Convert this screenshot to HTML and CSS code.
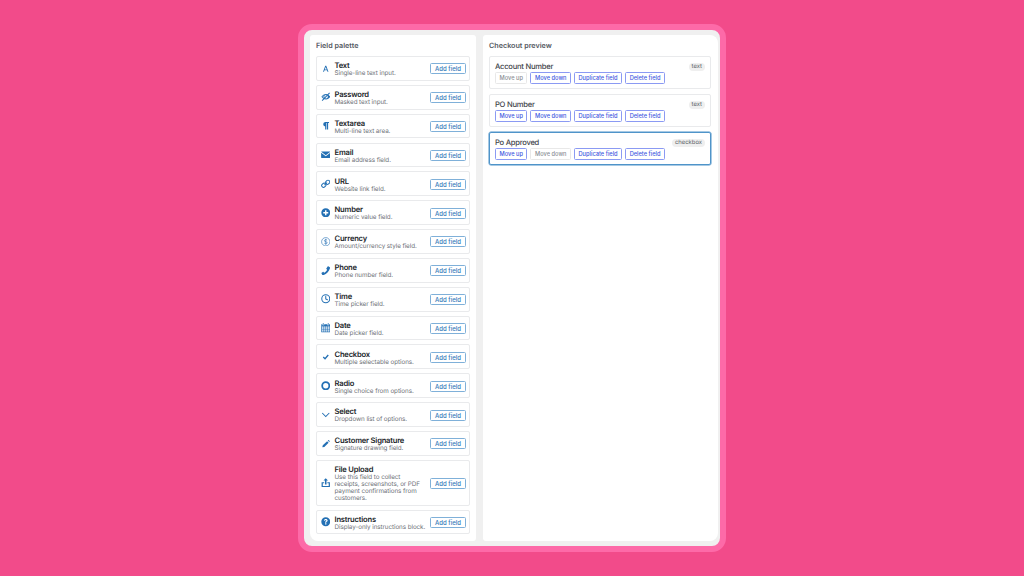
FILE: index.html
```html
<!DOCTYPE html>
<html lang="en">
<head>
<meta charset="utf-8">
<title>Checkout builder</title>
<link rel="stylesheet" href="styles.css">
</head>
<body>
<main class="frame">
  <section class="panel palette">
    <h2>Field palette</h2>
    <ul class="rows">
      <li class="row"><svg class="ico" viewBox="0 0 16 16"><path d="M7.200 3h1.600L12.600 13h-1.700l-.8-2.300H5.900l-.8 2.300H3.400zM6.400 9.300h3.200L8 4.900z"/></svg><div class="txt"><strong>Text</strong><span>Single-line text input.</span></div><button>Add field</button></li>
      <li class="row"><svg class="ico" viewBox="0 0 16 16"><path d="M8.500 3.400c3.200 0 5.700 2.300 7.300 4.600-1.600 2.300-4.100 4.600-7.300 4.600S2.300 10.300.7 8c1.600-2.300 4.600-4.600 7.800-4.600zM8.500 5a3 3 0 1 0 0 6 3 3 0 0 0 0-6zM2.400 8c1.300 1.500 3 2.900 5.600 3-2.200-.3-4-1.500-4-3s1.800-2.700 4-3C5.400 5.100 3.700 6.500 2.400 8z"/><path d="M13.900.8l1.200 1.200L2.500 15.200l-1.200-1.200z"/></svg><div class="txt"><strong>Password</strong><span>Masked text input.</span></div><button>Add field</button></li>
      <li class="row"><svg class="ico" viewBox="0 0 16 16"><path d="M7 1.500h6.500v2H12V14.500H10V3.500H9V14.500H7V9.200A3.900 3.900 0 0 1 7 1.500z"/></svg><div class="txt"><strong>Textarea</strong><span>Multi-line text area.</span></div><button>Add field</button></li>
      <li class="row"><svg class="ico" viewBox="0 0 16 16"><path d="M1 2.500h14c.3 0 .5.200.6.400L8 8.800.4 2.900c.1-.2.300-.4.600-.4zM.2 4.600L8 10.700l7.800-6.100v8.100c0 .4-.3.800-.8.800H1c-.5 0-.8-.4-.8-.8z"/></svg><div class="txt"><strong>Email</strong><span>Email address field.</span></div><button>Add field</button></li>
      <li class="row"><svg class="ico" viewBox="0 0 16 16"><path d="M6.400 9.600l3.200-3.200" class="line"/><rect x="8.300" y="1.800" width="6" height="7.500" rx="2.800" transform="rotate(45 11.300 5.500)" class="line"/><rect x="1.700" y="6.700" width="6" height="7.500" rx="2.800" transform="rotate(45 4.700 10.500)" class="line"/></svg><div class="txt"><strong>URL</strong><span>Website link field.</span></div><button>Add field</button></li>
      <li class="row"><svg class="ico" viewBox="0 0 16 16"><path fill-rule="evenodd" d="M8 .5a7.500 7.500 0 1 1 0 15A7.500 7.500 0 0 1 8 .5zM6.800 3.800v3H3.800v2.400h3v3h2.400v-3h3V6.800h-3v-3z"/></svg><div class="txt"><strong>Number</strong><span>Numeric value field.</span></div><button>Add field</button></li>
      <li class="row"><svg class="ico" viewBox="0 0 16 16"><circle cx="8" cy="8" r="7" class="thin"/><path d="M10.300 5.700C9.900 4.900 9 4.500 8 4.500c-1.300 0-2.300.7-2.300 1.800 0 2.500 4.700 1 4.700 3.500 0 1-1 1.700-2.400 1.700-1.100 0-2-.5-2.500-1.300M8 3v10" class="thin"/></svg><div class="txt"><strong>Currency</strong><span>Amount/currency style field.</span></div><button>Add field</button></li>
      <li class="row"><svg class="ico" viewBox="0 0 16 16"><path d="M12.300.6l2.500 1.500c.5.300.7.800.5 1.300C13.600 9.400 9 13.800 3.600 15.500c-.5.100-1 0-1.300-.5L.9 12.500c-.2-.4-.1-.8.200-1l2-1.500c.4-.2.800-.2 1.100.1l1.200 1.300c2-1 3.900-3 4.900-5.200L9.200 5.200c-.3-.3-.4-.7-.2-1.100L11.200.9c.3-.4.700-.5 1.100-.3z"/></svg><div class="txt"><strong>Phone</strong><span>Phone number field.</span></div><button>Add field</button></li>
      <li class="row"><svg class="ico" viewBox="0 0 16 16"><circle cx="8" cy="8" r="6.700" class="line"/><path d="M8 4v4.300l2.800 1.500" class="line"/></svg><div class="txt"><strong>Time</strong><span>Time picker field.</span></div><button>Add field</button></li>
      <li class="row"><svg class="ico" viewBox="0 0 16 16"><path fill-rule="evenodd" d="M3 .3h1.600V3H3zM11.400.3H13V3h-1.600zM.5 2.200h1.800v1.600h3.100V2.200h5.200v1.600h3.100V2.200h1.800v13.500H.5zM1.700 6v2.100h2.600V6zm3.500 0v2.100h2.400V6zm3.300 0v2.100h2.400V6zm3.300 0v2.100h2.500V6zM1.700 9v2h2.600V9zm3.500 0v2h2.400V9zm3.300 0v2h2.400V9zm3.300 0v2h2.500V9zM1.700 12v2.500h2.600V12zm3.500 0v2.500h2.400V12zm3.300 0v2.500h2.400V12zm3.300 0v2.500h2.500V12z"/></svg><div class="txt"><strong>Date</strong><span>Date picker field.</span></div><button>Add field</button></li>
      <li class="row"><svg class="ico" viewBox="0 0 16 16"><path d="M3.800 8.300l3 3.100 5.400-6.400" class="check"/></svg><div class="txt"><strong>Checkbox</strong><span>Multiple selectable options.</span></div><button>Add field</button></li>
      <li class="row"><svg class="ico" viewBox="0 0 16 16"><circle cx="8" cy="8" r="6" class="ring"/></svg><div class="txt"><strong>Radio</strong><span>Single choice from options.</span></div><button>Add field</button></li>
      <li class="row"><svg class="ico" viewBox="0 0 16 16"><path d="M2.500 5.500L8 11l5.500-5.500" class="line"/></svg><div class="txt"><strong>Select</strong><span>Dropdown list of options.</span></div><button>Add field</button></li>
      <li class="row"><svg class="ico" viewBox="0 0 16 16"><path d="M10.300 3.700l2.500 2.500-7.200 7.100-3.400.8.800-3.400zM11.300 2.700l.8-.8c.4-.3.900-.3 1.200 0l1.300 1.300c.3.300.3.800 0 1.200l-.8.800z"/></svg><div class="txt"><strong>Customer Signature</strong><span>Signature drawing field.</span></div><button>Add field</button></li>
      <li class="row"><svg class="ico" viewBox="0 0 16 16"><path d="M8 .4l3.800 4H9.300v6.400H6.700V4.400H4.200zM1 7h4.300v2H3v4.500h10V9h-2.300V7H15v8.500H1z"/></svg><div class="txt"><strong>File Upload</strong><span>Use this field to collect receipts, screenshots, or PDF payment confirmations from customers.</span></div><button>Add field</button></li>
      <li class="row"><svg class="ico" viewBox="0 0 16 16"><path fill-rule="evenodd" d="M8 .5a7.500 7.500 0 1 1 0 15A7.500 7.500 0 0 1 8 .5zM8 3.400c-1.700 0-3 .9-3.200 2.600l2 .3c.1-.7.500-1.100 1.200-1.100.6 0 1 .3 1 .8 0 .4-.3.700-.9 1.100-.8.500-1.200 1-1.200 2v.5h2v-.3c0-.5.200-.7.800-1.100.9-.6 1.500-1.200 1.500-2.300 0-1.500-1.300-2.500-3.200-2.500zM6.900 10.700v2h2.200v-2z"/></svg><div class="txt"><strong>Instructions</strong><span>Display-only instructions block.</span></div><button>Add field</button></li>
    </ul>
  </section>
  <section class="panel preview">
    <h2>Checkout preview</h2>
    <div class="cards">
      <article class="card">
        <div class="head"><h3>Account Number</h3><span class="badge">text</span></div>
        <div class="actions"><button class="off">Move up</button><button>Move down</button><button>Duplicate field</button><button>Delete field</button></div>
      </article>
      <article class="card">
        <div class="head"><h3>PO Number</h3><span class="badge">text</span></div>
        <div class="actions"><button>Move up</button><button>Move down</button><button>Duplicate field</button><button>Delete field</button></div>
      </article>
      <article class="card selected">
        <div class="head"><h3>Po Approved</h3><span class="badge">checkbox</span></div>
        <div class="actions"><button>Move up</button><button class="off">Move down</button><button>Duplicate field</button><button>Delete field</button></div>
      </article>
    </div>
  </section>
</main>
</body>
</html>
```

FILE: styles.css
```css
* { box-sizing: border-box; }
html, body { height: 100%; }
body {
  margin: 0;
  background: #f24b8a;
  display: flex;
  align-items: center;
  justify-content: center;
  font-family: Inter, "Liberation Sans", sans-serif;
  text-rendering: geometricPrecision;
}
.frame {
  width: 428px;
  height: 528px;
  border: 6px solid #fd6aa8;
  border-radius: 14px;
  background: #f0f0f0;
  padding: 5px 2px 5px 6px;
  display: flex;
  gap: 7px;
}
.panel {
  background: #fff;
  border-radius: 3px;
  padding: 6px;
  height: 100%;
}
.palette { width: 166px; flex: none; border-bottom-left-radius: 8px; }
.preview { flex: 1; padding-right: 7px; border-radius: 3px 8px 8px 3px; }
h2 {
  margin: 0 0 6px;
  font-size: 7.200px;
  line-height: 9px;
  font-weight: 600;
  color: #55595f;
}
.rows {
  list-style: none;
  margin: 0;
  padding: 0;
  display: flex;
  flex-direction: column;
  gap: 4.100px;
}
.row {
  display: flex;
  align-items: center;
  background: #fff;
  border: 1px solid #e9eaec;
  border-radius: 2px;
  padding: 4px 3px 2px;
  min-height: 24.750px;
}
.ico {
  width: 9.500px;
  height: 9.500px;
  flex: none;
  fill: #2470b4;
  margin: 0 4.500px 2px .5px;
}
.ico .line { fill: none; stroke: #2470b4; stroke-width: 1.700; stroke-linecap: round; }
.ico .thin { fill: none; stroke: #2470b4; stroke-width: 1; }
.ico .check { fill: none; stroke: #2470b4; stroke-width: 2.200; }
.ico .ring { fill: none; stroke: #2470b4; stroke-width: 3; }
.txt {
  flex: 1;
  min-width: 0;
  display: flex;
  flex-direction: column;
}
.txt strong {
  font-size: 7.600px;
  line-height: 9px;
  letter-spacing: -.2px;
  font-weight: 600;
  color: #202428;
}
.txt span {
  font-size: 6.300px;
  line-height: 7.200px;
  letter-spacing: -.08px;
  color: #70747a;
}
.row button {
  flex: none;
  width: 36px;
  height: 11px;
  margin: 0 0 1px 4px;
  padding: 0;
  background: #fff;
  border: 1px solid #7fb0d9;
  border-radius: 1.500px;
  font: 500 6px/9px Inter, "Liberation Sans", sans-serif;
  color: #3078b8;
  white-space: nowrap;
}
.cards {
  display: flex;
  flex-direction: column;
  gap: 5.500px;
}
.card {
  height: 32.500px;
  border: 1px solid #e9eaec;
  border-radius: 2px;
  padding: 4px 5px 0 5px;
}
.card.selected {
  border: 1px solid #4f94c9;
  box-shadow: 0 0 0 .5px #4f94c9;
  height: 33px;
}
.head {
  display: flex;
  align-items: center;
  justify-content: space-between;
  height: 10.500px;
  padding-top: .5px;
}
h3 {
  margin: 0;
  font-size: 7.600px;
  line-height: 10px;
  letter-spacing: -.25px;
  font-weight: 500;
  color: #3f444b;
}
.badge {
  background: #efefef;
  color: #5a5f66;
  font-size: 5.900px;
  line-height: 8px;
  padding: 0 3px;
  border-radius: 4px;
  margin-top: .5px;
}
.actions {
  display: flex;
  gap: 3px;
}
.actions button {
  height: 12px;
  padding: 0 3.500px;
  background: #fff;
  border: 1px solid #8b9af3;
  border-radius: 1.500px;
  font: 500 5.700px/9px Inter, "Liberation Sans", sans-serif;
  color: #4159e0;
  white-space: nowrap;
}
.actions button.off {
  border-color: #e8e8e8;
  color: #8b8f95;
}
```
